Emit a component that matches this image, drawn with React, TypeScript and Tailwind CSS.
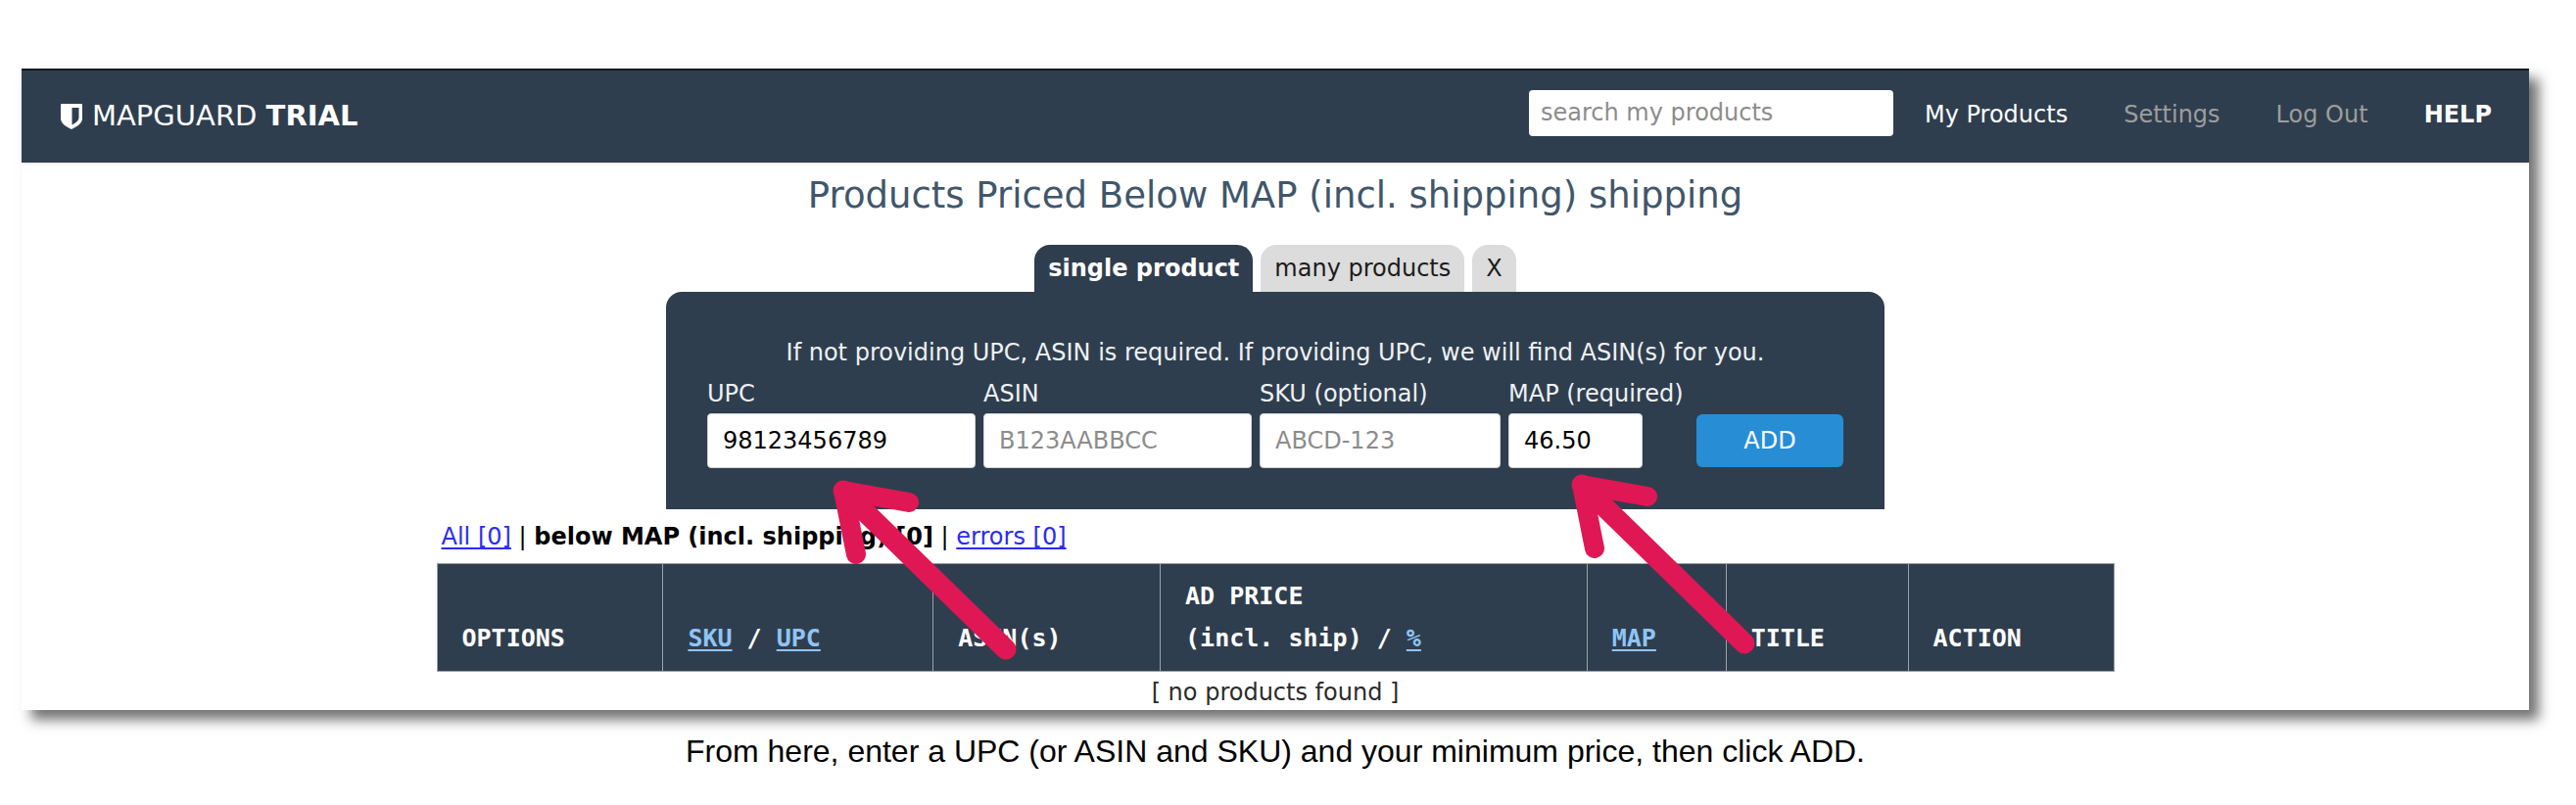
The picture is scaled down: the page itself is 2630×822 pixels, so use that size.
import type { ReactNode } from "react";

const fields = [
  { id: "upc", label: "UPC", width: "w-[274px]", value: "98123456789" },
  { id: "asin", label: "ASIN", width: "w-[274px]", placeholder: "B123AABBCC" },
  { id: "sku", label: "SKU (optional)", width: "w-[246px]", placeholder: "ABCD-123" },
  { id: "map", label: "MAP (required)", width: "w-[137px]", value: "46.50" },
];

const navLinks = [
  { title: "My Products", className: "text-white" },
  { title: "Settings", className: "text-[#9d9d9d]" },
  { title: "Log Out", className: "text-[#9d9d9d]" },
  { title: "HELP", className: "text-white font-bold" },
];

function Shield() {
  return (
    <svg viewBox="0 0 22 26" className="w-[22px] h-[26px]" aria-hidden="true">
      <path
        fill="#fff"
        fillRule="evenodd"
        d="M1 0h20q1 0 1 1v14c0 4-4 8-11 11C4 23 0 19 0 15V1q0-1 1-1zM11.500 4v17.500c4-2 7-4.500 7-7.500V4z"
      />
    </svg>
  );
}

function Arrow({ className }: { className: string }) {
  return (
    <svg
      viewBox="0 0 200 200"
      className={`absolute z-10 w-[200px] h-[200px] pointer-events-none ${className}`}
      fill="none"
      stroke="#e01755"
      strokeWidth="21"
      strokeLinecap="round"
      strokeLinejoin="round"
      aria-hidden="true"
    >
      <path d="M88 38L21 26L34 91" strokeWidth="20" />
      <path d="M21 26L187 188" />
      <path d="M21 26L48 37L33 52z" fill="#e01755" strokeWidth="6" />
    </svg>
  );
}

function SortLink({ children }: { children: ReactNode }) {
  return (
    <a href="#" className="text-[#8ec5f5] underline decoration-2 underline-offset-[3px]">
      {children}
    </a>
  );
}

function Header() {
  return (
    <header className="h-24 bg-[#2f3e4e] border-t-2 border-[#15191d] pl-10 pr-[38px] flex items-center justify-between shadow-sm">
      <a href="#" className="flex items-center gap-[10px] text-[29px] text-white whitespace-nowrap">
        <Shield />
        <span>
          MAPGUARD <b>TRIAL</b>
        </span>
      </a>
      <div className="flex items-center pb-2">
        <input
          type="search"
          aria-label="search my products"
          placeholder="search my products"
          className="w-[372px] h-[47px] mr-8 px-3 bg-white rounded-sm text-2xl placeholder:text-[#8c8c8c] placeholder:opacity-100"
        />
        <nav className="flex gap-[57px] pt-1">
          {navLinks.map((link) => (
            <a key={link.title} href="#" className={`text-2xl whitespace-nowrap ${link.className}`}>
              {link.title}
            </a>
          ))}
        </nav>
      </div>
    </header>
  );
}

function ProductForm() {
  return (
    <form
      className="relative w-[1244px] max-w-full h-[222px] mx-auto px-[42px] pt-11 bg-[#2f3e4e] text-[#eef1f4] rounded-t-2xl"
      onSubmit={(e) => e.preventDefault()}
    >
      <p className="text-2xl leading-9 text-center">
        If not providing UPC, ASIN is required. If providing UPC, we will find ASIN(s) for you.
      </p>
      <div className="mt-1 flex items-end gap-2">
        {fields.map((field) => (
          <div key={field.id} className="flex flex-col">
            <label htmlFor={field.id} className="text-2xl leading-10 whitespace-nowrap">
              {field.label}
            </label>
            <input
              id={field.id}
              type="text"
              defaultValue={field.value}
              placeholder={field.placeholder}
              className={`${field.width} h-14 px-[15px] bg-white border border-gray-300 rounded text-2xl text-black placeholder:text-[#8c8c8c] placeholder:opacity-100`}
            />
          </div>
        ))}
        <button
          type="submit"
          className="w-[150px] h-[54px] mb-px ml-auto bg-[#278ed6] rounded-md text-2xl text-white"
        >
          ADD
        </button>
      </div>
      <Arrow className="left-[160px] top-[177px]" />
      <Arrow className="left-[914px] top-[171px]" />
    </form>
  );
}

function ProductTable() {
  const cell = "border border-[#9aa1a8] pl-[25px] text-left align-bottom pb-3";
  return (
    <table className="w-full border-collapse bg-[#2f3e4e] text-white font-['DejaVu_Sans_Mono',monospace] text-[25px] leading-[43px]">
      <thead>
        <tr className="h-[110px]">
          <th className={`${cell} w-[231px]`}>OPTIONS</th>
          <th className={`${cell} w-[276px]`}>
            <SortLink>SKU</SortLink> / <SortLink>UPC</SortLink>
          </th>
          <th className={`${cell} w-[232px]`}>ASIN(s)</th>
          <th className={`${cell} w-[436px]`}>
            AD PRICE
            <br />
            (incl. ship) / <SortLink>%</SortLink>
          </th>
          <th className={`${cell} w-[142px]`}>
            <SortLink>MAP</SortLink>
          </th>
          <th className={`${cell} w-[186px]`}>TITLE</th>
          <th className={`${cell} w-[210px]`}>ACTION</th>
        </tr>
      </thead>
    </table>
  );
}

export default function App() {
  return (
    <div className="bg-white pt-[70px] pb-9 font-['DejaVu_Sans',sans-serif]">
      <div className="ml-[22px] mr-12 bg-white shadow-[10px_10px_12px_rgba(0,0,0,0.55)]">
        <Header />
        <main>
          <h1 className="pt-1 text-[37px] leading-[60px] text-center text-[#40566b]">
            Products Priced Below MAP (incl. shipping) shipping
          </h1>
          <div className="mt-5 flex justify-center gap-2 text-2xl" role="tablist">
            <button role="tab" aria-selected="true" className="h-12 px-[14px] bg-[#2f3e4e] text-white font-bold rounded-t-2xl">
              single product
            </button>
            <button role="tab" aria-selected="false" className="h-12 px-[14px] bg-[#dcdcdc] text-[#1c1c1c] rounded-t-2xl">
              many products
            </button>
            <button type="button" className="h-12 px-[14px] bg-[#dcdcdc] text-[#1c1c1c] rounded-t-2xl">
              X
            </button>
          </div>
          <ProductForm />
          <section className="w-[1713px] max-w-full mx-auto">
            <div className="h-[55px] pl-[5px] text-2xl leading-[56px]">
              <a href="#" className="text-[#2c2cf0] underline decoration-2 underline-offset-[3px]">All [0]</a>
              {" | "}
              <b>below MAP (incl. shipping) [0]</b>
              {" | "}
              <a href="#" className="text-[#2c2cf0] underline decoration-2 underline-offset-[3px]">errors [0]</a>
            </div>
            <ProductTable />
            <p className="h-[39px] text-2xl leading-[42px] text-center text-[#2b2b2b]">[ no products found ]</p>
          </section>
        </main>
      </div>
      <p className="mt-[22px] text-[32px] leading-10 text-center mr-[26px] text-black font-['Liberation_Sans',sans-serif]">
        From here, enter a UPC (or ASIN and SKU) and your minimum price, then click ADD.
      </p>
    </div>
  );
}
